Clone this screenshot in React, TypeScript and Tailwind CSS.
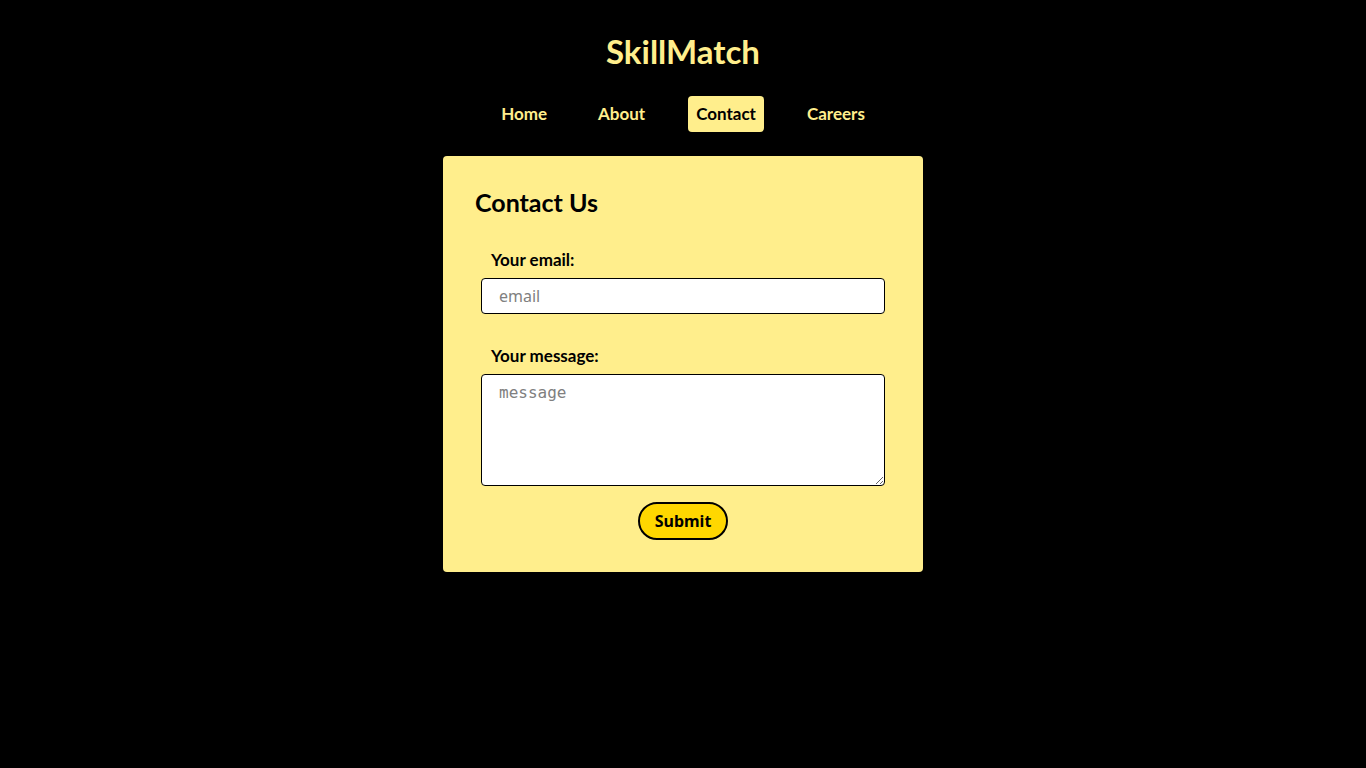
import { useState } from "react";

const links = ["Home", "About", "Contact", "Careers"];

export default function App() {
  const [active] = useState<string>("Contact");

  return (
    <div className="min-h-screen w-full bg-black font-['Lato','Noto_Sans',sans-serif]">
      <header className="flex flex-col items-center pt-[29px]">
        <h1 className="text-[33px] leading-[44px] font-bold text-[#ffee8c]">
          SkillMatch
        </h1>
        <nav className="mt-[23px] flex items-center gap-[35px]">
          {links.map((link) => (
            <a
              key={link}
              href="#"
              className={
                link === active
                  ? "rounded-[4px] bg-[#ffee8c] px-2 h-[36px] flex items-center text-[17px] font-bold text-black"
                  : "rounded-[4px] px-2 h-[36px] flex items-center text-[17px] font-bold text-[#ffee8c]"
              }
            >
              {link}
            </a>
          ))}
        </nav>
      </header>

      <main className="flex justify-center mt-[24px]">
        <div className="w-[480px] rounded-[4px] bg-[#ffee8c] px-[32px] pt-[30px] pb-[32px]">
          <h2 className="text-[25px] leading-[32px] font-bold text-black">
            Contact Us
          </h2>
          <form className="mt-[30px] px-[6px] flex flex-col">
            <label className="pl-[10px] text-[17px] leading-[24px] font-bold text-black">
              Your email:
            </label>
            <input
              type="email"
              placeholder="email"
              className="mt-[6px] h-[36px] w-full rounded-[4px] border border-black bg-white px-[17px] text-[16px] font-['Noto_Sans',sans-serif] placeholder:text-[#808080] outline-none"
            />
            <label className="mt-[30px] pl-[10px] text-[17px] leading-[24px] font-bold text-black">
              Your message:
            </label>
            <textarea
              placeholder="message"
              className="mt-[6px] h-[112px] w-full rounded-[4px] border border-black bg-white px-[17px] py-[6px] text-[16px] font-['DejaVu_Sans_Mono',monospace] placeholder:text-[#808080] outline-none"
            />
            <div className="mt-[16px] flex justify-center">
              <button
                type="button"
                className="h-[38px] w-[90px] rounded-full border-2 border-black bg-[#ffd700] text-[16px] font-bold text-black font-['Noto_Sans',sans-serif]"
              >
                Submit
              </button>
            </div>
          </form>
        </div>
      </main>
    </div>
  );
}
